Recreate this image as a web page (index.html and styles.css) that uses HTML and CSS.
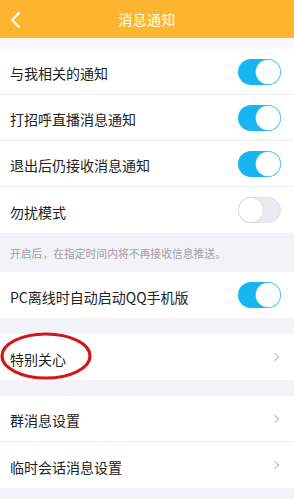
FILE: index.html
```html
<!DOCTYPE html>
<html lang="zh-CN">
<head>
<meta charset="utf-8">
<link rel="stylesheet" href="styles.css">
</head>
<body>
<div class="page">
  <header class="topbar">
    <svg class="back" width="14" height="18" viewBox="0 0 14 18"><path d="M10 2 L3 9 L10 16" fill="none" stroke="#fff" stroke-width="2.2" stroke-linecap="round" stroke-linejoin="round"/></svg>
    <div class="title">消息通知</div>
  </header>
  <div class="gap-top"></div>
  <section class="group">
    <div class="row"><span class="label">与我相关的通知</span><span class="toggle on"><span class="knob"></span></span></div>
    <div class="row"><span class="label">打招呼直播消息通知</span><span class="toggle on"><span class="knob"></span></span></div>
    <div class="row"><span class="label">退出后仍接收消息通知</span><span class="toggle on"><span class="knob"></span></span></div>
    <div class="row last"><span class="label">勿扰模式</span><span class="toggle off"><span class="knob"></span></span></div>
  </section>
  <div class="note">开启后，在指定时间内将不再接收信息推送。</div>
  <section class="group">
    <div class="row last"><span class="label">PC离线时自动启动QQ手机版</span><span class="toggle on"><span class="knob"></span></span></div>
  </section>
  <div class="gap"></div>
  <section class="group">
    <div class="row last special"><span class="label">特别关心</span><span class="chev"></span>
      <svg class="circle" width="96" height="50" viewBox="0 0 96 50"><ellipse cx="46" cy="24" rx="44" ry="22" fill="none" stroke="#d2161c" stroke-width="3.2"/></svg>
    </div>
  </section>
  <div class="gap"></div>
  <section class="group">
    <div class="row"><span class="label">群消息设置</span><span class="chev"></span></div>
    <div class="row last"><span class="label">临时会话消息设置</span><span class="chev"></span></div>
  </section>
</div>
</body>
</html>
```

FILE: styles.css
```css
* { box-sizing: border-box; margin: 0; padding: 0; }
html, body { width: 294px; height: 499px; overflow: hidden; }
body {
  background: #f3f3f7;
  font-family: "Noto Sans CJK SC", "Noto Sans", sans-serif;
  color: #222;
}
.page { display: flex; flex-direction: column; }
.topbar {
  height: 38px;
  background: #fdb42f;
  position: relative;
  display: flex;
  align-items: center;
  justify-content: center;
}
.back { position: absolute; left: 9px; top: 11px; }
.title { color: #fff; font-size: 14px; letter-spacing: 0.3px; }
.gap-top { height: 11px; background: #f9f9fb; }
.group { background: #fff; }
.row {
  height: 46px;
  display: flex;
  align-items: center;
  justify-content: space-between;
  padding: 0 12px 0 10px;
  border-bottom: 1px solid #ececf0;
  position: relative;
}
.row.last { border-bottom: none; }
.label { font-size: 14px; line-height: 1; padding-top: 3px; }
.toggle {
  width: 43px;
  height: 26px;
  border-radius: 13px;
  position: relative;
  margin-right: 1px;
}
.toggle.on { background: #17b6f2; }
.toggle.off { background: #eaeaf2; border: 1px solid #e2e2ea; }
.knob {
  position: absolute;
  top: 1px;
  width: 24px;
  height: 24px;
  border-radius: 50%;
  background: #fff;
}
.toggle.on .knob { right: 1px; box-shadow: 0 0 0 0.5px #9fd8ee; }
.toggle.off .knob { left: 0; top: 0; box-shadow: 0 0 0 1px #dcdce2, 0 1px 2px rgba(0,0,0,0.08); }
.note {
  height: 39px;
  display: flex;
  align-items: center;
  padding-left: 10px;
  font-size: 10.8px;
  color: #a0a0a6;
}
.gap { height: 16px; }
.chev {
  width: 6px;
  height: 6px;
  border-top: 1.3px solid #b8b8be;
  border-right: 1.3px solid #b8b8be;
  transform: rotate(45deg);
  margin-right: 4px;
}
.circle { position: absolute; left: 0; top: -2px; }
```
